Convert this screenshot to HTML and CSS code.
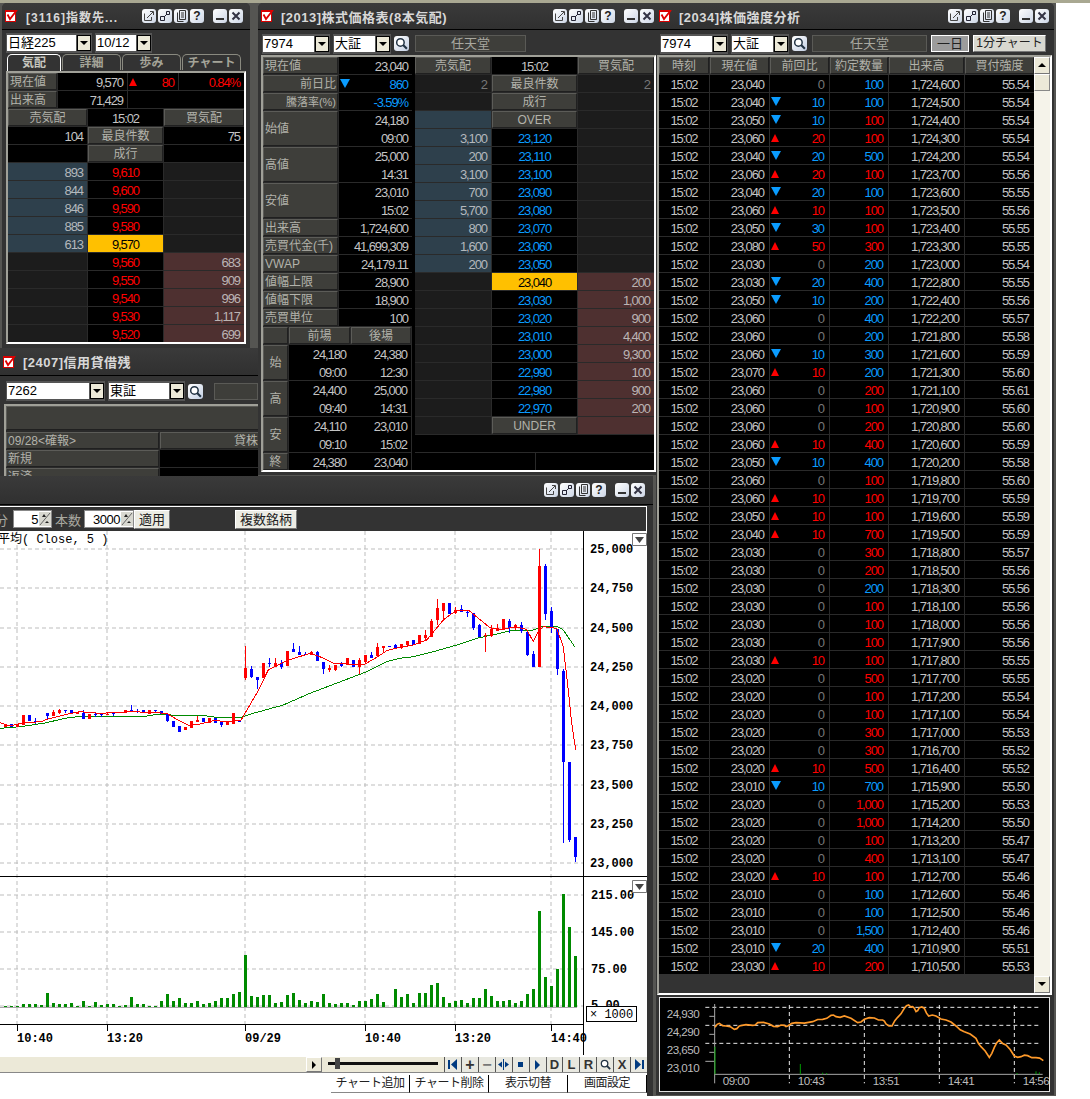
FILE: index.html
```html
<!DOCTYPE html>
<html lang="ja">
  <head>
    <meta charset="UTF-8" />
    <title>Trading desk</title>
    <link rel="stylesheet" href="styles.css">
  </head>
  <body>
    <svg class="defs">
      <symbol id="i-logo" viewBox="0 0 13 12"><rect x="0.500" y="1.500" width="10" height="10" fill="#fff" stroke="#d80000"/><path d="M0 0h11v2H0z" fill="#d80000"/><path d="M2.500 4.500l2.500 4.500 7-9" fill="none" stroke="#e00000" stroke-width="1.800"/></symbol>
      <symbol id="i-pop" viewBox="0 0 14 14"><path d="M2.500 4.500v7h7V8M5 9l6-6M8 2.500h3.500V6" fill="none" stroke="#444"/></symbol>
      <symbol id="i-res" viewBox="0 0 14 14"><path d="M2.500 7.500h4v4h-4zM8.500 2.500h3v3h-3zM6 8l3-3" fill="none" stroke="#223"/></symbol>
      <symbol id="i-doc" viewBox="0 0 14 14"><path d="M5.500 1.500h6v9h-6zM3.500 3.500v9h6M7 4h3M7 6h3M7 8h3" fill="none" stroke="#333"/></symbol>
      <symbol id="i-min" viewBox="0 0 14 14"><path d="M3 9h8v2H3z" fill="#333"/></symbol>
      <symbol id="i-x" viewBox="0 0 14 14"><path d="M3.500 3.500l7 7M10.500 3.500l-7 7" stroke="#334" stroke-width="2"/></symbol>
      <symbol id="i-find" viewBox="0 0 14 14"><circle cx="6" cy="6" r="3.500" fill="#fff" stroke="#234" stroke-width="1.400"/><path d="M8.500 8.500l3.500 3.500" stroke="#234" stroke-width="2"/></symbol>
      <symbol id="i-spin" viewBox="0 0 12 14"><path d="M0 0h12v14H0z" fill="#d8d8d0"/><path d="M1 13L11 1" stroke="#666"/><path d="M3 5l2-3 2 3zM6 11h4l-2-2z" fill="#222"/></symbol>
    </svg>

    <div class="desk">
      <!-- 指数先物 -->
      <section class="win win-index">
        <header class="title">
          <svg class="logo"><use href="#i-logo"/></svg>
          <h2>[3116]指数先...</h2>
          <div class="wbtns">
            <span class="wb"><svg><use href="#i-pop"/></svg></span><span class="wb"><svg><use href="#i-res"/></svg></span><span class="wb"><svg><use href="#i-doc"/></svg></span><span class="wb">?</span>
            <span class="wb wb-min"><svg><use href="#i-min"/></svg></span><span class="wb"><svg><use href="#i-x"/></svg></span>
          </div>
        </header>
        <div class="tool">
          <div class="combo"><span class="combo-val w-69">日経225</span><span class="combo-btn"></span></div>
          <div class="combo"><span class="combo-val w-40">10/12</span><span class="combo-btn"></span></div>
        </div>
        <nav class="tabs">
          <span class="tab on">気配</span><span class="tab">詳細</span><span class="tab">歩み</span><span class="tab">チャート</span>
        </nav>
        <div class="pane">
          <div class="cells idx-top">
            <div class="lab">現在値</div><div class="val">9,570</div>
            <div class="val spread"><i class="up"></i><b class="red">80</b></div><div class="val red">0.84%</div>
            <div class="lab">出来高</div><div class="val">71,429</div><div class="val span-2"></div>
          </div>
          <div class="cells idx-book">
            <div class="lab mid">売気配</div><div class="val mid">15:02</div><div class="lab mid">買気配</div>
            <div class="val">104</div><div class="lab mid">最良件数</div><div class="val">75</div>
            <div class="val"></div><div class="lab mid">成行</div><div class="val"></div>
            <div class="ask">893</div><div class="px red">9,610</div><div class="nil"></div>
            <div class="ask">844</div><div class="px red">9,600</div><div class="nil"></div>
            <div class="ask">846</div><div class="px red">9,590</div><div class="nil"></div>
            <div class="ask">885</div><div class="px red">9,580</div><div class="nil"></div>
            <div class="ask">613</div><div class="px cur">9,570</div><div class="nil"></div>
            <div class="nil"></div><div class="px red">9,560</div><div class="bid">683</div>
            <div class="nil"></div><div class="px red">9,550</div><div class="bid">909</div>
            <div class="nil"></div><div class="px red">9,540</div><div class="bid">996</div>
            <div class="nil"></div><div class="px red">9,530</div><div class="bid">1,117</div>
            <div class="nil"></div><div class="px red">9,520</div><div class="bid">699</div>
          </div>
        </div>
      </section>

      <!-- 信用貸借残 -->
      <section class="win win-margin">
        <header class="title">
          <svg class="logo"><use href="#i-logo"/></svg>
          <h2>[2407]信用貸借残</h2>
        </header>
        <div class="tool">
          <div class="combo"><span class="combo-val w-82">7262</span><span class="combo-btn"></span></div>
          <div class="combo"><span class="combo-val w-60">東証</span><span class="combo-btn"></span></div>
          <span class="find"><svg><use href="#i-find"/></svg></span>
          <div class="name grow"></div>
        </div>
        <div class="pane">
          <div class="lab margin-head"></div>
          <div class="cells margin-rows">
            <div class="lab">09/28&lt;確報&gt;</div><div class="lab end">貸株</div>
            <div class="lab">新規</div><div class="val"></div>
            <div class="lab">返済</div><div class="val"></div>
          </div>
        </div>
      </section>

      <!-- 株式価格表 -->
      <section class="win win-stock">
        <header class="title">
          <svg class="logo"><use href="#i-logo"/></svg>
          <h2>[2013]株式価格表(8本気配)</h2>
          <div class="wbtns">
            <span class="wb"><svg><use href="#i-pop"/></svg></span><span class="wb"><svg><use href="#i-res"/></svg></span><span class="wb"><svg><use href="#i-doc"/></svg></span><span class="wb">?</span>
            <span class="wb wb-min"><svg><use href="#i-min"/></svg></span><span class="wb"><svg><use href="#i-x"/></svg></span>
          </div>
        </header>
        <div class="tool">
          <div class="combo"><span class="combo-val w-51">7974</span><span class="combo-btn"></span></div>
          <div class="combo"><span class="combo-val w-41">大証</span><span class="combo-btn"></span></div>
          <span class="find"><svg><use href="#i-find"/></svg></span>
          <div class="name w-name">任天堂</div>
        </div>
        <div class="pane stock-body">
          <div class="stock-left">
            <div class="cells stock-info">
              <div class="lab">現在値</div><div class="val">23,040</div>
              <div class="lab end">前日比</div><div class="val spread"><i class="down"></i><b class="blue">860</b></div>
              <div class="lab end small">騰落率(%)</div><div class="val blue">-3.59%</div>
              <div class="lab tall">始値</div><div class="val tall"><p>24,180</p><p>09:00</p></div>
              <div class="lab tall">高値</div><div class="val tall"><p>25,000</p><p>14:31</p></div>
              <div class="lab tall">安値</div><div class="val tall"><p>23,010</p><p>15:02</p></div>
              <div class="lab">出来高</div><div class="val">1,724,600</div>
              <div class="lab">売買代金(千)</div><div class="val">41,699,309</div>
              <div class="lab">VWAP</div><div class="val">24,179.11</div>
              <div class="lab">値幅上限</div><div class="val">28,900</div>
              <div class="lab">値幅下限</div><div class="val">18,900</div>
              <div class="lab">売買単位</div><div class="val">100</div>
            </div>
            <div class="cells stock-session">
              <div class="lab"></div><div class="lab mid">前場</div><div class="lab mid">後場</div>
              <div class="lab tall mid">始</div><div class="val tall join"><p>24,180</p><p>09:00</p></div><div class="val tall"><p>24,380</p><p>12:30</p></div>
              <div class="lab tall mid">高</div><div class="val tall join"><p>24,400</p><p>09:40</p></div><div class="val tall"><p>25,000</p><p>14:31</p></div>
              <div class="lab tall mid">安</div><div class="val tall join"><p>24,110</p><p>09:10</p></div><div class="val tall"><p>23,010</p><p>15:02</p></div>
              <div class="lab mid">終</div><div class="val join">24,380</div><div class="val">23,040</div>
            </div>
          </div>
          <div class="stock-right">
            <div class="cells stock-book">
              <div class="lab mid">売気配</div><div class="val mid">15:02</div><div class="lab mid">買気配</div>
              <div class="nil">2</div><div class="lab mid">最良件数</div><div class="nil">2</div>
              <div class="nil"></div><div class="lab mid">成行</div><div class="nil"></div>
              <div class="ask"></div><div class="lab mid">OVER</div><div class="nil"></div>
              <div class="ask">3,100</div><div class="px blue">23,120</div><div class="nil"></div>
              <div class="ask">200</div><div class="px blue">23,110</div><div class="nil"></div>
              <div class="ask">3,100</div><div class="px blue">23,100</div><div class="nil"></div>
              <div class="ask">700</div><div class="px blue">23,090</div><div class="nil"></div>
              <div class="ask">5,700</div><div class="px blue">23,080</div><div class="nil"></div>
              <div class="ask">800</div><div class="px blue">23,070</div><div class="nil"></div>
              <div class="ask">1,600</div><div class="px blue">23,060</div><div class="nil"></div>
              <div class="ask">200</div><div class="px blue">23,050</div><div class="nil"></div>
              <div class="nil"></div><div class="px cur">23,040</div><div class="bid">200</div>
              <div class="nil"></div><div class="px blue">23,030</div><div class="bid">1,000</div>
              <div class="nil"></div><div class="px blue">23,020</div><div class="bid">900</div>
              <div class="nil"></div><div class="px blue">23,010</div><div class="bid">4,400</div>
              <div class="nil"></div><div class="px blue">23,000</div><div class="bid">9,300</div>
              <div class="nil"></div><div class="px blue">22,990</div><div class="bid">100</div>
              <div class="nil"></div><div class="px blue">22,980</div><div class="bid">900</div>
              <div class="nil"></div><div class="px blue">22,970</div><div class="bid">200</div>
              <div class="nil"></div><div class="lab mid">UNDER</div><div class="bid"></div>
              <div class="val span-3"></div>
            </div>
            <div class="cells stock-foot"><div class="val"></div><div class="val"></div></div>
          </div>
        </div>
      </section>

      <!-- チャート -->
      <section class="win win-chart">
        <header class="title">
          <div class="wbtns">
            <span class="wb"><svg><use href="#i-pop"/></svg></span><span class="wb"><svg><use href="#i-res"/></svg></span><span class="wb"><svg><use href="#i-doc"/></svg></span><span class="wb">?</span>
            <span class="wb wb-min"><svg><use href="#i-min"/></svg></span><span class="wb"><svg><use href="#i-x"/></svg></span>
          </div>
        </header>
        <div class="chart-body">
          <div class="chart-tool">
            <span class="tool-lab first">分</span>
            <span class="spin w-39"><b>5</b><svg><use href="#i-spin"/></svg></span>
            <span class="tool-lab">本数</span>
            <span class="spin w-50"><b>3000</b><svg><use href="#i-spin"/></svg></span>
            <span class="btn apply">適用</span>
            <span class="btn multi">複数銘柄</span>
          </div>
          <svg id="chart" class="plot" width="647" height="524" viewBox="0 531 647 524">
            <path class="grid" d="M0 549H583M0 588H583M0 628H583M0 667H583M0 706H583M0 745H583M0 785H583M0 824H583M0 863H583M0 895H583M0 932H583M0 969H583M0 1006H583"/>
            <path class="grid" d="M17 531V1024M107 531V1024M245 531V1024M365 531V1024M455 531V1024M551 531V1024"/>
            <g id="candles"></g>
            <g id="volume"></g>
            <path class="axis" d="M583.500 531V1055M0 876.500H647M0 1024.500H583M17.500 1024V1031M107.500 1024V1031M245.500 1024V1031M365.500 1024V1031M455.500 1024V1031M551.500 1024V1031"/>
            <text class="formula" x="-2" y="543">平均( Close, 5 )</text>
            <g class="ax">
              <text x="590" y="553">25,000</text><text x="590" y="592">24,750</text><text x="590" y="632">24,500</text>
              <text x="590" y="671">24,250</text><text x="590" y="710">24,000</text><text x="590" y="749">23,750</text>
              <text x="590" y="789">23,500</text><text x="590" y="828">23,250</text><text x="590" y="867">23,000</text>
              <text x="591" y="899">215.00</text><text x="591" y="936">145.00</text><text x="591" y="973">75.00</text><text x="591" y="1009">5.00</text>
              <text x="17" y="1042">10:40</text><text x="107" y="1042">13:20</text><text x="245" y="1042">09/29</text>
              <text x="365" y="1042">10:40</text><text x="455" y="1042">13:20</text><text x="551" y="1042">14:40</text>
            </g>
            <path class="drop" d="M632.500 533.500h14v12h-14z"/><path d="M635 537h9l-4.500 6z" fill="#444"/>
            <path class="drop" d="M632.500 880.500h14v12h-14z"/><path d="M635 884h9l-4.500 6z" fill="#444"/>
            <rect class="scale-box" x="586.500" y="1006.500" width="50" height="15"/>
            <text class="scale-txt" x="590" y="1018">× 1000</text>
          </svg>
          <div class="chart-bar">
            <div class="hscroll"><span class="hs-btn"></span></div>
            <div class="slider"><i class="slider-rail"></i><i class="slider-knob"></i></div>
            <div class="navs">
              <span class="nav"><svg width="13" height="13" viewBox="0 0 13 13"><path d="M2 2h2v9H2zM11 1v11L5 6.500z" fill="#003a80"/></svg></span>
              <span class="nav big">+</span><span class="nav big muted">−</span>
              <span class="nav"><svg width="13" height="13" viewBox="0 0 13 13"><path d="M6 1h1v11H6zM1 6.500l4-3v6zM12 6.500l-4-3v6z" fill="#003a80"/></svg></span>
              <span class="nav"><i class="n-stop"></i></span><span class="nav"><i class="n-play"></i></span>
              <span class="nav">D</span><span class="nav">L</span><span class="nav">R</span>
              <span class="nav"><svg width="13" height="13"><use href="#i-find"/></svg></span>
              <span class="nav">X</span>
              <span class="nav"><svg width="13" height="13" viewBox="0 0 13 13"><path d="M9 2h2v9H9zM2 1v11l6-5.500z" fill="#003a80"/></svg></span>
            </div>
          </div>
          <div class="chart-foot">
            <span class="fbtn">チャート追加</span><span class="fbtn">チャート削除</span><span class="fbtn">表示切替</span><span class="fbtn">画面設定</span>
          </div>
        </div>
      </section>

      <!-- 株価強度分析 -->
      <section class="win win-ticks">
        <header class="title">
          <svg class="logo"><use href="#i-logo"/></svg>
          <h2>[2034]株価強度分析</h2>
          <div class="wbtns">
            <span class="wb"><svg><use href="#i-pop"/></svg></span><span class="wb"><svg><use href="#i-res"/></svg></span><span class="wb"><svg><use href="#i-doc"/></svg></span><span class="wb">?</span>
            <span class="wb wb-min"><svg><use href="#i-min"/></svg></span><span class="wb"><svg><use href="#i-x"/></svg></span>
          </div>
        </header>
        <div class="tool">
          <div class="combo"><span class="combo-val w-51">7974</span><span class="combo-btn"></span></div>
          <div class="combo"><span class="combo-val w-41">大証</span><span class="combo-btn"></span></div>
          <span class="find"><svg><use href="#i-find"/></svg></span>
          <div class="name w-name2">任天堂</div>
          <span class="btn range on">一日</span>
          <span class="btn range">1分チャート</span>
        </div>
        <div class="pane ticks-body">
          <div>
            <div class="cells ticks-head">
              <div class="lab mid">時刻</div><div class="lab mid">現在値</div><div class="lab mid">前回比</div><div class="lab mid">約定数量</div><div class="lab mid">出来高</div><div class="lab mid">買付強度</div>
            </div>
            <div id="ticks" class="cells ticks-rows"></div>
          </div>
          <div class="vscroll">
            <span class="vs-btn"><i class="tri-up"></i></span>
            <span class="vs-thumb"></span>
            <span class="vs-track"></span>
            <span class="vs-btn"><i class="tri-down"></i></span>
          </div>
        </div>
        <svg id="mini" class="mini" viewBox="9 171 1173 285">
          <path class="mini-dash" d="M148 202H1155M148 256H1155M148 310H1155M400 195V430M625 195V430M850 195V430M1075 195V430"/>
          <path class="mini-axis" d="M176 192V430M148 364H176M176 403H1160M160 229H176M160 283H176M160 337H176"/>
          <path class="mini-vol" d="M177 320V403M433 372V403M500 398V403M512 399V403M730 399V403M1140 394V403M1150 397V403M1083 399V403"/>
          <polyline id="mini-line" class="mini-line" points=""/>
          <g class="mini-txt">
            <text x="32" y="234">24,930</text><text x="32" y="288">24,290</text><text x="32" y="342">23,650</text><text x="32" y="396">23,010</text>
            <text x="200" y="436">09:00</text><text x="425" y="436">10:43</text><text x="650" y="436">13:51</text><text x="875" y="436">14:41</text><text x="1100" y="436">14:56</text>
          </g>
        </svg>
      </section>
    </div>

    <script src="chart.js"></script>
  </body>
</html>
```

FILE: styles.css
```css
html,
body {
  margin: 0;
  background: #ffffff;
}

body {
  border-top: 3px solid #a9a892;
  font-family: "Liberation Sans", "Noto Sans CJK JP", sans-serif;
  font-size: 12px;
  color: #c4c4c4;
}

.defs {
  position: absolute;
  width: 0;
  height: 0;
}

p {
  margin: 0;
  height: 18px;
  line-height: 20px;
}

/* windows */
.desk {
  position: relative;
  width: 1056px;
  height: 1093px;
  background: #555552;
  overflow: hidden;
}

.win {
  position: absolute;
  display: flex;
  flex-direction: column;
  background: #333333;
  overflow: hidden;
}
.win-index {
  left: 2px;
  top: 0;
  width: 248px;
  height: 345px;
  border-radius: 5px 5px 0 0;
}
.win-margin {
  left: 0;
  top: 345px;
  width: 258px;
  height: 129px;
}
.win-stock {
  left: 258px;
  top: 0;
  width: 401px;
  height: 472px;
  border-radius: 5px 5px 0 0;
}
.win-chart {
  left: 0;
  top: 473px;
  width: 653px;
  height: 620px;
}
.win-ticks {
  left: 656px;
  top: 0;
  width: 398px;
  height: 1092px;
  border-radius: 0 5px 0 0;
}

.title {
  display: flex;
  align-items: center;
  height: 26px;
  flex: none;
  padding: 0 5px 0 3px;
  background: linear-gradient(#3a3a3a, #303030);
  border-bottom: 1px solid #000000;
}
.win-index .title {
  padding-right: 7px;
}
.win-margin .title {
  height: 27px;
}
.win-chart .title {
  height: 28px;
  padding-right: 8px;
}
.title h2 {
  margin: 0 0 0 7px;
  font-size: 13px;
  font-weight: bold;
  letter-spacing: 0.5px;
  color: #d8d8d8;
  white-space: nowrap;
}
.win-index .title h2 {
  margin-left: 8px;
  font-size: 12px;
  letter-spacing: 1px;
}
.logo {
  width: 13px;
  height: 12px;
  flex: none;
}

.wbtns {
  display: flex;
  gap: 2px;
  margin-left: auto;
}
.wb {
  width: 14px;
  height: 14px;
  border-radius: 3px;
  background: linear-gradient(135deg, #ffffff, #cdd6e6);
  color: #222222;
  font-size: 12px;
  font-weight: bold;
  line-height: 14px;
  text-align: center;
}
.wb svg {
  display: block;
  width: 14px;
  height: 14px;
}
.wb-min {
  margin-left: 7px;
}

.tool {
  display: flex;
  align-items: center;
  gap: 3px;
  height: 24px;
  flex: none;
  padding: 2px 0 0 4px;
  box-sizing: border-box;
}
.win-stock .tool,
.win-ticks .tool {
  height: 25px;
}
.win-margin .tool {
  height: 28px;
  padding-left: 6px;
}

.combo {
  display: flex;
  align-items: center;
  height: 18px;
  background: #555555;
  padding: 1px;
}
.combo-val {
  height: 16px;
  line-height: 16px;
  background: #ffffff;
  color: #000000;
  font-size: 13px;
  padding-left: 1px;
  box-sizing: border-box;
  white-space: nowrap;
  overflow: hidden;
}
.combo-btn {
  position: relative;
  width: 14px;
  height: 16px;
  margin-left: 1px;
  background: #ece9d8;
  border: 1px solid #000000;
  box-sizing: border-box;
}
.combo-btn::after {
  content: "";
  position: absolute;
  left: 2px;
  top: 5px;
  border-left: 4px solid transparent;
  border-right: 4px solid transparent;
  border-top: 4px solid #000000;
}
.w-39 { width: 39px; }
.w-40 { width: 40px; }
.w-41 { width: 41px; }
.w-50 { width: 50px; }
.w-51 { width: 51px; }
.w-60 { width: 60px; }
.w-69 { width: 69px; }
.w-82 { width: 82px; }
.w-name { width: 111px; margin-left: 3px; }
.w-name2 { width: 115px; margin-left: 2px; }

.find {
  width: 15px;
  height: 15px;
  border-radius: 3px;
  background: linear-gradient(135deg, #ffffff, #c4d0e4);
}
.find svg {
  display: block;
  width: 15px;
  height: 15px;
}
.name {
  height: 17px;
  line-height: 16px;
  background: #3e3e3a;
  border: 1px solid #5a5a56;
  box-sizing: border-box;
  text-align: center;
  color: #a8a8a0;
  font-size: 13px;
}
.grow {
  width: 50px;
  margin-left: 8px;
}

/* tabs */
.tabs {
  display: flex;
  height: 17px;
  flex: none;
  padding-left: 5px;
  gap: 1px;
}
.tab {
  width: 59px;
  height: 16px;
  line-height: 17px;
  box-sizing: border-box;
  border: 1px solid #8a8a80;
  border-bottom: 0;
  border-radius: 5px 5px 0 0;
  text-align: center;
  font-weight: bold;
  color: #a4a498;
}
.tab.on {
  width: 54px;
  height: 17px;
  border-color: #ffffff;
  color: #c8c8c0;
}

/* panes and cells */
.pane {
  flex: none;
  border: 2px solid;
  border-color: #a0a098 #ffffff #ffffff #a0a098;
  background: #2a2a2a;
}
.win-index .pane {
  margin-left: 4px;
  width: 236px;
}
.win-margin .pane {
  margin-left: 4px;
  height: 80px;
  width: 260px;
}

.cells {
  display: grid;
  gap: 1px;
  grid-auto-rows: 17px;
  background: #2a2a2a;
}
.cells > * {
  box-sizing: border-box;
  font-size: 13px;
  line-height: 20px;
  padding: 0 4px;
  white-space: nowrap;
  overflow: hidden;
  letter-spacing: -1.1px;
}
.lab {
  background: #3e3e3a;
  border: 1px solid;
  border-color: #5c5c58 #202020 #202020 #5c5c58;
  color: #b2b2aa;
  font-size: 12px !important;
  line-height: 17px !important;
  padding: 0 1px !important;
  letter-spacing: 0 !important;
}
.val {
  background: #000000;
  color: #c4c4c4;
  text-align: right;
}
.nil {
  background: #1c1c1c;
  color: #777777;
  text-align: right;
}
.ask {
  background: #2e404c;
  color: #b4b8bc;
  text-align: right;
}
.bid {
  background: #4e3030;
  color: #bcb4b4;
  text-align: right;
}
.px {
  background: #000000;
  text-align: center;
}
.cur {
  background: #ffc000;
  color: #000000;
}
.red { color: #ff0000; font-weight: normal; }
.blue { color: #0a9cff; font-weight: normal; }
.zero { color: #777777; }
.mid { text-align: center; }
.end { text-align: right; }
.small { font-size: 11px !important; }
.tall { grid-row: span 2; }
.lab.tall { line-height: 35px !important; }
.join { box-shadow: 1px 0 0 #000000; }
.span-2 { grid-column: span 2; }
.span-3 { grid-column: span 3; }

.spread {
  display: flex;
  justify-content: space-between;
  align-items: center;
}
.spread b {
  padding-top: 2px;
}
.up {
  width: 0;
  height: 0;
  margin-left: -3px;
  border-left: 4.500px solid transparent;
  border-right: 4.500px solid transparent;
  border-bottom: 8px solid #ff0000;
}
.down {
  width: 0;
  height: 0;
  margin-left: -3px;
  border-left: 5px solid transparent;
  border-right: 5px solid transparent;
  border-top: 9px solid #0a9cff;
}

.idx-top {
  grid-template-columns: 49px 69px 50px 65px;
  margin-bottom: 1px;
}
.idx-book {
  grid-template-columns: 79px 75px 80px;
}
.margin-head {
  height: 22px;
  margin-bottom: 2px;
}
.margin-rows {
  grid-template-columns: 153px 100px;
}

.stock-body {
  display: flex;
  margin-left: 3px;
  width: 391px;
  background: #000000;
}
.stock-left {
  width: 149px;
  margin-right: 3px;
  background: #2a2a2a;
}
.stock-right {
  width: 239px;
  background: #2a2a2a;
}
.stock-info {
  grid-template-columns: 75px 73px;
  margin-bottom: 1px;
}
.stock-session {
  grid-template-columns: 25px 61px 60px;
}
.stock-book {
  grid-template-columns: 76px 85px 76px;
}
.stock-foot {
  grid-template-columns: 120px 118px;
  margin-top: 1px;
}

/* tick list */
.ticks-body {
  display: flex;
  margin-left: 1px;
  width: 391px;
  height: 936px;
  background: #333333;
}
.ticks-head,
.ticks-rows {
  grid-template-columns: 50px 59px 59px 58px 75px 69px;
  width: 375px;
}
.ticks-head {
  margin-bottom: 1px;
}
.ticks-rows > .val {
  padding-right: 5px;
}
.ticks-rows > .tm {
  padding: 0;
  text-align: center;
}
.vscroll {
  display: flex;
  flex-direction: column;
  width: 16px;
}
.vs-btn {
  position: relative;
  height: 17px;
  flex: none;
  background: #ece9d8;
  border: 1px solid;
  border-color: #ffffff #777777 #777777 #ffffff;
  box-sizing: border-box;
}
.vs-thumb {
  height: 17px;
  flex: none;
  background: #ece9d8;
  border: 1px solid;
  border-color: #ffffff #888888 #888888 #ffffff;
  box-sizing: border-box;
}
.vs-track {
  flex: 1;
  background: #f5f3ea;
}
.tri-up,
.tri-down {
  position: absolute;
  left: 3px;
  top: 5px;
  border-left: 4px solid transparent;
  border-right: 4px solid transparent;
}
.tri-up { border-bottom: 4px solid #000000; }
.tri-down { border-top: 4px solid #000000; }

.mini {
  display: block;
  width: 391px;
  height: 95px;
  margin: 2px 0 0 3px;
  background: #000000;
  outline: 1px solid #e0e0e0;
  outline-offset: -1px;
}
.mini-dash {
  fill: none;
  stroke: #e8e8e8;
  stroke-width: 3;
  stroke-dasharray: 12 9;
}
.mini-axis {
  fill: none;
  stroke: #a8a8a8;
  stroke-width: 3;
}
.mini-vol {
  fill: none;
  stroke: #009a00;
  stroke-width: 3;
}
.mini-line {
  fill: none;
  stroke: #ff9a2a;
  stroke-width: 5;
}
.mini-txt {
  fill: #bcbcbc;
  font-size: 35px;
  letter-spacing: -1.500px;
}

/* chart window */
.chart-body {
  width: 647px;
  height: 589px;
  background: #ffffff;
  border-top: 1px solid #ffffff;
  margin-top: 1px;
  display: flex;
  flex-direction: column;
}
.chart-tool {
  display: flex;
  align-items: center;
  gap: 3px;
  height: 24px;
  flex: none;
  background: #333333;
  border-right: 1px solid #ffffff;
  box-sizing: border-box;
}
.tool-lab {
  color: #a8a8a0;
  font-size: 13px;
}
.tool-lab.first {
  margin: 0 2px 0 -5px;
}
.spin {
  display: flex;
  align-items: center;
  justify-content: flex-end;
  height: 18px;
  background: #ffffff;
  border: 1px solid #888888;
  box-sizing: border-box;
  color: #000000;
  font-size: 13px;
  letter-spacing: -0.500px;
}
.spin b {
  font-weight: normal;
  margin-right: 1px;
}
.spin svg {
  width: 12px;
  height: 14px;
}
.btn {
  height: 19px;
  line-height: 17px;
  padding: 0 4px;
  box-sizing: border-box;
  background: #ecece4;
  border: 1px solid;
  border-color: #ffffff #777777 #777777 #ffffff;
  color: #222222;
  font-size: 13px;
  text-align: center;
}
.apply {
  margin-left: -3px;
}
.multi {
  margin-left: 62px;
}
.range {
  height: 17px;
  line-height: 15px;
  width: 38px;
  margin-left: 1px;
  padding: 0;
  font-size: 12px;
  background: #d8d8d0;
  flex: none;
}
.range + .range {
  width: 73px;
}
.range.on {
  background: #9c9c9c;
  border-color: #ffffff;
  font-size: 13px;
}

.plot {
  display: block;
  flex: none;
}
.grid {
  fill: none;
  stroke: #bdbdbd;
  stroke-dasharray: 4 3;
}
.axis {
  fill: none;
  stroke: #000000;
}
.formula {
  font-family: "Liberation Mono", "Noto Sans CJK JP", monospace;
  font-size: 12px;
  fill: #000000;
}
.ax {
  font-family: "Liberation Mono", monospace;
  font-size: 12px;
  font-weight: bold;
  fill: #000000;
}
.drop {
  fill: #ffffff;
  stroke: #777777;
}
.scale-box {
  fill: #ffffff;
  stroke: #000000;
}
.scale-txt {
  font-family: "Liberation Mono", monospace;
  font-size: 12px;
  fill: #000000;
}

.chart-bar {
  display: flex;
  height: 15px;
  margin-top: 2px;
  flex: none;
  background: #ece9d8;
  border-bottom: 1px solid #888888;
}
.hscroll {
  width: 322px;
  display: flex;
  justify-content: flex-end;
}
.hs-btn {
  position: relative;
  width: 16px;
  background: #ece9d8;
  border: 1px solid;
  border-color: #ffffff #777777 #777777 #ffffff;
  box-sizing: border-box;
}
.hs-btn::after {
  content: "";
  position: absolute;
  left: 5px;
  top: 3px;
  border-top: 4px solid transparent;
  border-bottom: 4px solid transparent;
  border-left: 4px solid #000000;
}
.slider {
  position: relative;
  width: 122px;
}
.slider-rail {
  position: absolute;
  left: 6px;
  right: 6px;
  top: 5px;
  height: 3px;
  background: #111111;
}
.slider-knob {
  position: absolute;
  left: 13px;
  top: 1px;
  width: 5px;
  height: 11px;
  background: #444444;
}
.navs {
  display: flex;
  gap: 1px;
  width: 203px;
  padding: 0 0 0 1px;
  box-sizing: border-box;
  background: #555555;
}
.nav {
  display: flex;
  align-items: center;
  justify-content: center;
  width: 16px;
  background: #e8e8e0;
  color: #333333;
  font-size: 13px;
  font-weight: bold;
}
.nav.big {
  font-size: 16px;
}
.nav.muted {
  color: #777777;
}
.n-stop {
  width: 5px;
  height: 5px;
  background: #003a80;
}
.n-play {
  border-top: 5px solid transparent;
  border-bottom: 5px solid transparent;
  border-left: 5px solid #003a80;
}

.chart-foot {
  display: flex;
  justify-content: flex-end;
  flex: 1;
  padding-top: 2px;
  background: #ffffff;
}
.fbtn {
  width: 79px;
  height: 18px;
  line-height: 17px;
  box-sizing: border-box;
  text-align: center;
  color: #222222;
  background: #ffffff;
  border-right: 1px solid #000000;
  border-bottom: 1px solid #888888;
  letter-spacing: -0.500px;
}
```

FILE: chart.js
```js
// tick list: price|change|qty|color|volume|strength
const ticks = `23,040|0|100|b|1,724,600|55.54
23,040|-10|100|b|1,724,500|55.54
23,050|-10|100|r|1,724,400|55.54
23,060|+20|100|r|1,724,300|55.54
23,040|-20|500|b|1,724,200|55.54
23,060|+20|100|r|1,723,700|55.56
23,040|-20|100|b|1,723,600|55.55
23,060|+10|100|r|1,723,500|55.56
23,050|-30|100|r|1,723,400|55.55
23,080|+50|300|r|1,723,300|55.55
23,030|0|200|b|1,723,000|55.54
23,030|-20|400|b|1,722,800|55.55
23,050|-10|200|b|1,722,400|55.56
23,060|0|400|b|1,722,200|55.57
23,060|0|200|b|1,721,800|55.58
23,060|-10|300|b|1,721,600|55.59
23,070|+10|200|b|1,721,300|55.60
23,060|0|200|r|1,721,100|55.61
23,060|0|100|r|1,720,900|55.60
23,060|0|200|r|1,720,800|55.60
23,060|+10|400|r|1,720,600|55.59
23,050|-10|400|b|1,720,200|55.58
23,060|0|100|r|1,719,800|55.60
23,060|+10|100|r|1,719,700|55.59
23,050|+10|100|r|1,719,600|55.59
23,040|+10|700|r|1,719,500|55.59
23,030|0|300|r|1,718,800|55.57
23,030|0|200|r|1,718,500|55.56
23,030|0|200|b|1,718,300|55.56
23,030|0|100|r|1,718,100|55.56
23,030|0|100|r|1,718,000|55.56
23,030|0|100|r|1,717,900|55.56
23,030|+10|100|r|1,717,800|55.55
23,020|0|500|r|1,717,700|55.55
23,020|0|100|r|1,717,200|55.54
23,020|0|100|r|1,717,100|55.54
23,020|0|300|r|1,717,000|55.53
23,020|0|300|r|1,716,700|55.52
23,020|+10|500|r|1,716,400|55.52
23,010|-10|700|b|1,715,900|55.50
23,020|0|1,000|r|1,715,200|55.53
23,020|0|1,000|r|1,714,200|55.50
23,020|0|100|r|1,713,200|55.47
23,020|0|400|r|1,713,100|55.47
23,020|+10|100|r|1,712,700|55.46
23,010|0|100|b|1,712,600|55.46
23,010|0|100|b|1,712,500|55.46
23,010|0|1,500|b|1,712,400|55.46
23,010|-20|400|b|1,710,900|55.51
23,030|+10|200|r|1,710,500|55.53`;

const changeCell = (change) => {
  if (change === "0") return `<div class="val zero">0</div>`;
  const up = change[0] === "+";
  return `<div class="val spread"><i class="${up ? "up" : "down"}"></i><b class="${up ? "red" : "blue"}">${change.slice(1)}</b></div>`;
};

document.querySelector("#ticks").innerHTML = ticks
  .split("\n")
  .map((line) => {
    const [price, change, qty, color, volume, strength] = line.split("|");
    return `<div class="val tm">15:02</div><div class="val">${price}</div>${changeCell(change)}<div class="val ${color === "r" ? "red" : "blue"}">${qty}</div><div class="val">${volume}</div><div class="val">${strength}</div>`;
  })
  .join("");

// candles read off the chart: [x, color, body top, body bottom, wick top, wick bottom], y is (px - 530) * 3
const leftCandles = [
  [16, "r", 583, 590], [34, "b", 583, 592], [52, "r", 583, 592], [70, "r", 556, 584], [88, "b", 556, 572],
  [106, "b", 573, 575, 564, 583], [142, "b", 549, 558, 549, 568], [160, "r", 546, 557, 541, 557], [178, "r", 541, 549, 537, 552],
  [196, "b", 541, 543, 541, 550], [214, "b", 541, 550], [232, "r", 545, 552], [250, "b", 548, 566, 541, 566],
  [268, "r", 551, 566], [286, "b", 551, 553, 546, 560], [304, "b", 553, 555, 549, 560], [322, "r", 551, 553, 547, 553],
  [340, "b", 547, 553, 547, 557], [358, "r", 547, 549], [376, "r", 541, 550], [394, "b", 541, 543, 525, 543],
  [412, "b", 542, 544, 538, 548], [430, "b", 541, 549], [448, "r", 541, 551], [466, "b", 541, 544, 541, 548],
  [484, "b", 544, 551], [502, "b", 551, 572, 551, 576], [520, "b", 572, 590], [538, "b", 588, 605], [556, "r", 592, 599],
  [574, "r", 574, 593], [592, "r", 570, 576, 558, 576], [610, "b", 565, 576], [628, "r", 565, 580], [646, "b", 565, 578],
  [664, "b", 572, 584, 572, 590], [682, "r", 576, 584], [700, "r", 550, 581], [718, "b", 573, 575],
  [736, "r", 414, 443, 348, 449], [754, "b", 417, 442, 408, 445], [772, "b", 441, 449, 441, 476], [790, "r", 400, 443],
  [808, "b", 398, 400, 385, 410], [826, "r", 399, 411, 384, 411], [844, "b", 400, 411, 390, 416], [862, "r", 363, 408],
  [880, "b", 357, 365, 339, 365], [898, "b", 366, 375, 348, 375], [916, "b", 372, 376, 367, 376], [934, "r", 365, 375, 362, 375],
  [952, "b", 366, 392, 362, 392], [970, "b", 397, 418, 397, 431], [988, "r", 414, 419, 405, 425], [1006, "r", 405, 420, 405, 424],
  [1024, "b", 400, 408, 396, 410], [1042, "r", 383, 402], [1060, "b", 391, 410], [1078, "r", 391, 410, 385, 432],
  [1096, "r", 376, 396, 376, 398], [1114, "b", 376, 384, 365, 384], [1132, "r", 351, 378, 339, 378], [1150, "r", 349, 353, 349, 365],
  [1168, "b", 349, 350], [1186, "b", 346, 353, 343, 358],
];
const rightCandles = [
  [4, "r", 341, 353, 341, 358], [22, "r", 332, 346], [40, "b", 330, 346], [58, "r", 316, 343], [76, "r", 316, 325, 300, 330],
  [94, "r", 273, 321, 267, 321], [112, "r", 235, 270, 207, 284], [130, "r", 220, 243, 220, 268], [148, "b", 219, 251],
  [166, "r", 240, 250, 232, 252], [184, "b", 238, 246, 226, 246], [202, "b", 246, 249, 243, 260], [220, "b", 249, 294, 249, 300],
  [238, "b", 285, 320, 282, 322], [256, "r", 314, 316, 310, 366], [274, "r", 296, 318, 286, 320], [292, "r", 293, 302, 282, 302],
  [310, "r", 268, 296], [328, "b", 273, 294, 268, 308], [346, "r", 286, 294, 282, 300], [364, "b", 286, 303, 276, 308],
  [382, "b", 305, 375, 300, 378], [400, "b", 372, 410, 364, 410], [418, "r", 108, 410, 58, 410], [436, "b", 108, 251, 102, 270],
  [454, "b", 243, 292, 232, 308], [472, "b", 297, 416, 297, 434], [490, "b", 423, 697, 418, 938], [508, "b", 696, 930, 696, 935],
  [526, "b", 922, 980, 922, 996],
];
const redMa = [[0, 578], [30, 588], [70, 578], [125, 575], [140, 568], [200, 553], [240, 545], [300, 550], [400, 545], [500, 550], [530, 568], [565, 586], [600, 582], [640, 572], [680, 574], [722, 572], [770, 490], [805, 420], [860, 392], [930, 370], [960, 380], [1000, 400], [1090, 405], [1130, 382], [1160, 362], [1200, 352]];
const redMaRight = [[40, 345], [80, 330], [130, 270], [170, 240], [205, 240], [270, 293], [300, 300], [345, 290], [380, 298], [400, 335], [415, 305], [430, 290], [470, 295], [490, 350], [505, 480], [515, 580], [527, 660]];
const greenMa = [[0, 595], [60, 590], [130, 580], [210, 562], [240, 560], [430, 560], [470, 553], [530, 556], [620, 558], [650, 562], [722, 562], [760, 550], [850, 525], [930, 490], [1100, 425], [1160, 395], [1200, 385]];
const greenMaRight = [[40, 380], [100, 365], [170, 345], [230, 325], [300, 310], [340, 300], [400, 300], [430, 288], [470, 288], [490, 300], [524, 350]];

const px = (x, left) => Math.round(left + x / 3);
const py = (y) => Math.round(530 + y / 3);

const candle = ([x, color, top, bottom, wickTop, wickBottom], left) => {
  const fill = color === "r" ? "#ff0000" : "#0000ff";
  const cx = px(x, left);
  let out = `<rect x="${cx - 1}" y="${py(top)}" width="3" height="${Math.max(py(bottom) - py(top), 1)}" fill="${fill}"/>`;
  if (wickTop !== undefined) {
    out += `<rect x="${cx}" y="${py(wickTop)}" width="1" height="${py(wickBottom) - py(wickTop)}" fill="${fill}"/>`;
  }
  return out;
};

const line = (points, left) =>
  points.map(([x, y]) => `${(left + x / 3).toFixed(1)},${(530 + y / 3).toFixed(1)}`).join(" ");

document.querySelector("#candles").innerHTML =
  `<polyline points="${line(greenMa, 0)} ${line(greenMaRight, 400)}" fill="none" stroke="#008a00" shape-rendering="crispEdges"/>` +
  leftCandles.map((c) => candle(c, 0)).join("") +
  rightCandles.map((c) => candle(c, 400)).join("") +
  `<polyline points="${line(redMa, 0)} ${line(redMaRight, 400)}" fill="none" stroke="#ff0000" shape-rendering="crispEdges"/>`;

// volume bars, one every 6px from x=5
const volumes = [1, 1, 1, 3, 3, 3, 2, 14, 4, 3, 3, 4, 1, 6, 1, 5, 2, 3, 3, 1, 2, 10, 3, 3, 1, 1, 6, 13, 6, 9, 4, 4, 6, 3, 4, 6, 9, 9, 13, 15, 52, 11, 10, 12, 12, 4, 5, 12, 14, 7, 4, 6, 5, 13, 4, 3, 4, 4, 2, 6, 6, 8, 13, 5, 0, 18, 10, 13, 4, 14, 14, 22, 24, 10, 4, 6, 7, 4, 9, 9, 18, 11, 6, 6, 7, 4, 6, 13, 18, 96, 30, 21, 38, 113, 80, 51];

document.querySelector("#volume").innerHTML =
  volumes.map((h, i) => `<rect x="${4 + i * 6}" y="${1007 - h}" width="3" height="${h}" fill="#008a00"/>`).join("") +
  `<rect x="0" y="1007" width="577" height="1" fill="#a8a8a8"/>`;

// small price chart under the list
const miniPoints = "177,262 190,250 210,258 235,268 250,258 290,256 305,248 340,252 365,260 385,256 395,258 420,248 470,245 500,238 525,226 540,230 565,228 605,248 625,238 655,234 680,240 690,252 708,258 725,232 745,205 758,195 770,200 780,215 790,203 805,205 818,228 840,228 870,240 900,258 925,275 960,295 975,320 1000,352 1015,322 1030,300 1050,315 1075,348 1095,350 1115,347 1140,353 1162,362"
  .split(" ")
  .map((p) => p.split(",").map(Number));

const jagged = [];
miniPoints.forEach(([x, y], i) => {
  const next = miniPoints[i + 1];
  jagged.push(`${x},${y}`);
  if (next) {
    const mx = (x + next[0]) / 2;
    const my = (y + next[1]) / 2 + (i % 2 ? 3 : -3);
    jagged.push(`${mx},${my}`);
  }
});
document.querySelector("#mini-line").setAttribute("points", jagged.join(" "));
```
